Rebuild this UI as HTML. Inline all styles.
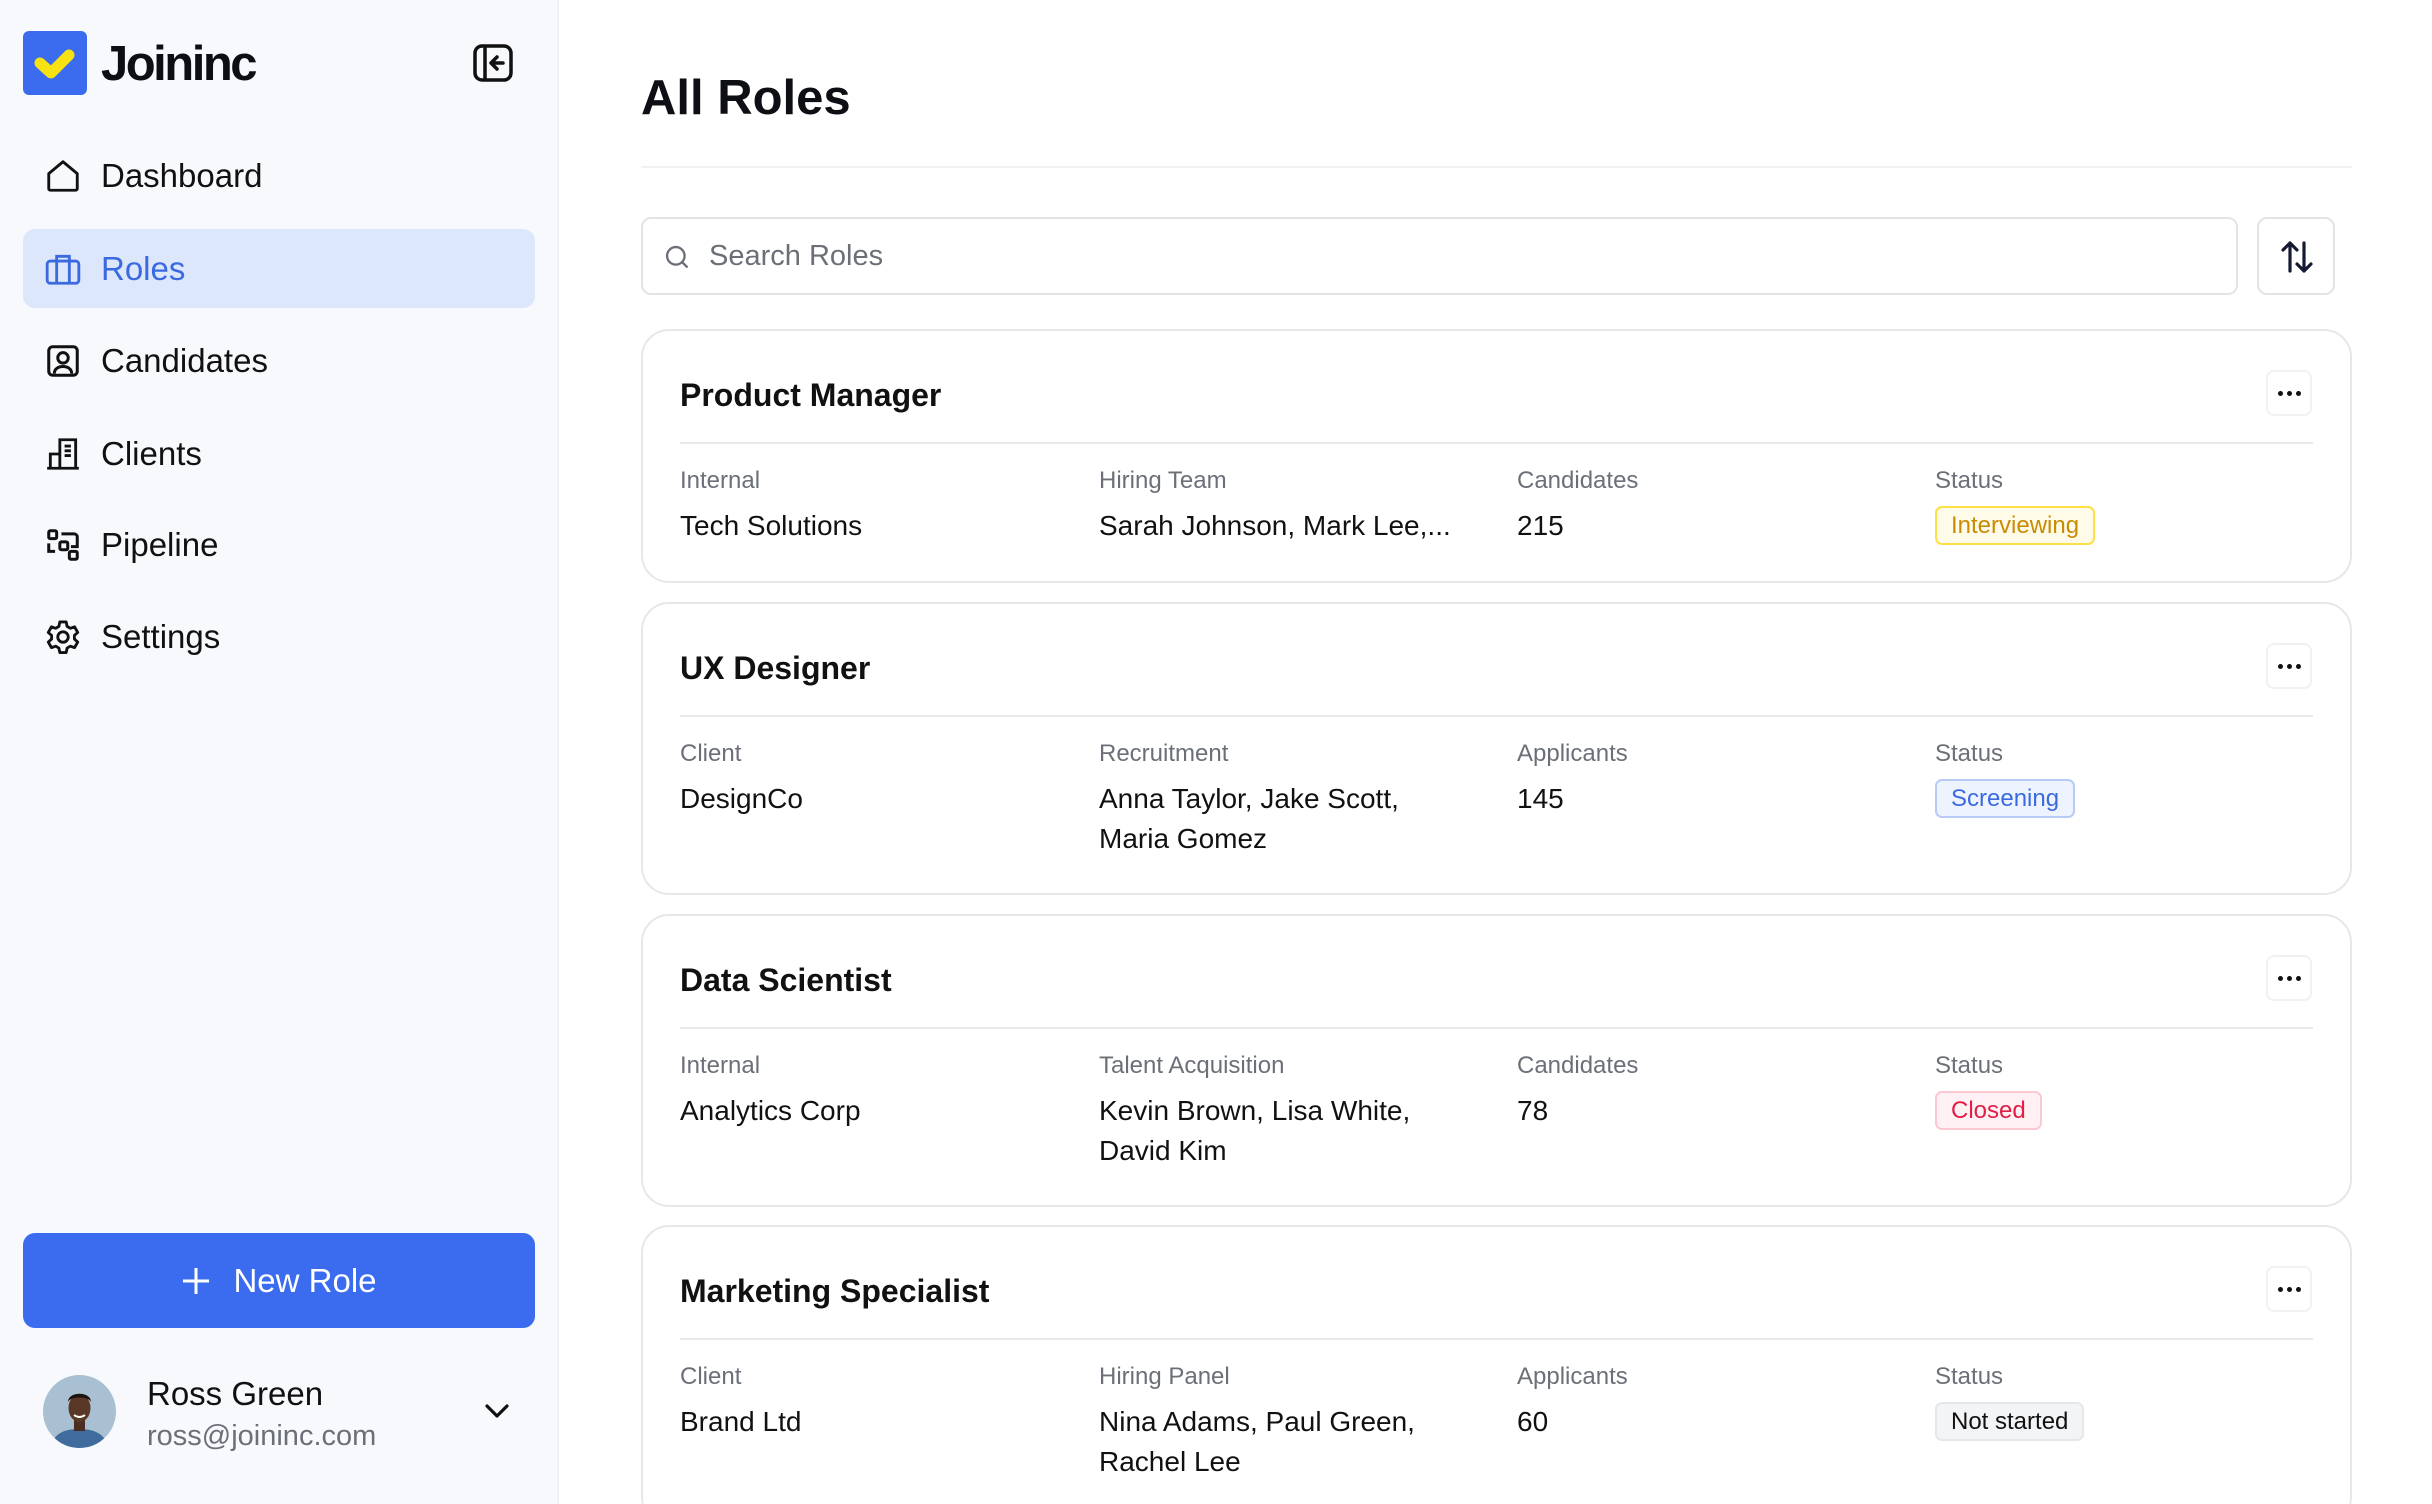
<!DOCTYPE html>
<html style="overflow:hidden;width:2432px;height:1504px"><head><meta charset="utf-8"><style>
*{box-sizing:border-box;margin:0;padding:0}
body{width:2432px;height:1504px;overflow:hidden;background:#fff;font-family:"Liberation Sans",Arial,sans-serif;color:#111;position:relative}
.abs{position:absolute}
.side{position:absolute;left:0;top:0;width:559px;height:1504px;background:#f7f9fc;border-right:2px solid #eef0f3}
.nav{position:absolute;left:23px;width:512px;height:79px;border-radius:12px;display:flex;align-items:center;font-size:33px;color:#111}
.nav svg{position:absolute;left:21px;top:50%;transform:translateY(-50%)}
.nav span{position:absolute;left:78px}
.card{position:absolute;left:641px;width:1711px;border:2px solid #e6e7ea;border-radius:28px;background:#fff}
.title{position:absolute;left:37px;top:44px;line-height:40px;font-size:32px;font-weight:bold;color:#111}
.dots{position:absolute;left:1623px;top:39px;width:46px;height:46px;border:2px solid #f0f1f3;border-radius:8px;display:flex;align-items:center;justify-content:center;gap:4px}
.dots i{width:5px;height:5px;background:#111;border-radius:50%}
.hr{position:absolute;left:37px;right:37px;top:111px;height:2px;background:#e9eaec}
.lab{position:absolute;top:133px;line-height:34px;font-size:24px;color:#6b7078}
.val{position:absolute;top:175px;line-height:40px;font-size:28px;color:#111}
.badge{position:absolute;top:175px;height:39px;line-height:35px;font-size:24px;padding:0 14px;border-radius:7px;border:2px solid}
</style></head><body>
<div class="side">
  <div class="abs" style="left:23px;top:31px;width:64px;height:64px;background:#3b6cf0;border-radius:6px">
    <svg width="64" height="64" viewBox="0 0 64 64"><path d="M17 32 L28 42 L46 24" stroke="#f9e211" stroke-width="11" fill="none" stroke-linecap="round" stroke-linejoin="round"/></svg>
  </div>
  <div class="abs" style="left:101px;top:36px;font-size:49px;font-weight:bold;letter-spacing:-2.5px;line-height:56px;color:#0d0f14">Joininc</div>
  <svg class="abs" style="left:473px;top:43px" width="40" height="40" viewBox="0 0 40 40" fill="none" stroke="#111" stroke-width="3.5" stroke-linecap="round" stroke-linejoin="round"><rect x="2" y="3" width="36" height="34" rx="7"/><line x1="12" y1="4" x2="12" y2="36"/><path d="M30 20 H19 M24 14 L18 20 L24 26"/></svg>

  <div class="nav" style="top:136px"><svg width="38" height="38" viewBox="0 0 24 24" fill="none" stroke="#111" stroke-width="1.8" stroke-linejoin="round"><path d="M3 10.5 L12 3 L21 10.5 V20 a1 1 0 0 1-1 1 H4 a1 1 0 0 1-1-1 Z"/></svg><span>Dashboard</span></div>
  <div class="nav" style="top:229px;background:#dce7fc;color:#3b6ae0"><svg width="38" height="38" viewBox="0 0 24 24" fill="none" stroke="#3b6ae0" stroke-width="1.8"><rect x="2" y="7" width="20" height="14" rx="2"/><path d="M8 7 V4 h8 v3 M8 7 V21 M16 7 V21"/></svg><span>Roles</span></div>
  <div class="nav" style="top:321px"><svg width="38" height="38" viewBox="0 0 24 24" fill="none" stroke="#111" stroke-width="1.9"><rect x="3" y="3" width="18" height="18" rx="2.5"/><circle cx="12" cy="10" r="3.3"/><path d="M6.5 20 c0-3 2.5-4.5 5.5-4.5 s5.5 1.5 5.5 4.5"/></svg><span>Candidates</span></div>
  <div class="nav" style="top:414px"><svg width="38" height="38" viewBox="0 0 24 24" fill="none" stroke="#111" stroke-width="1.8"><path d="M2 21 H22 M4 21 V12 H10 M10 21 V3 H20 V21 M13 7 h4 M13 10 h4 M13 13 h4"/></svg><span>Clients</span></div>
  <div class="nav" style="top:505px"><svg width="38" height="38" viewBox="0 0 24 24" fill="none" stroke="#111" stroke-width="1.9"><rect x="3" y="3" width="5" height="5" rx="1"/><rect x="10" y="10" width="5" height="5" rx="1"/><rect x="16" y="16" width="5" height="5" rx="1"/><path d="M3 11 V16 H7 M11 5 H19 a2 2 0 0 1 2 2 V13 H17"/></svg><span>Pipeline</span></div>
  <div class="nav" style="top:597px"><svg width="38" height="38" viewBox="0 0 24 24" fill="none" stroke="#111" stroke-width="1.8" stroke-linejoin="round"><path d="M10 2.5 h4 l.6 2.8 2 1.2 2.7-.9 2 3.5-2.1 1.9 v2.3 l2.1 1.9-2 3.5-2.7-.9-2 1.2-.6 2.8 h-4 l-.6-2.8-2-1.2-2.7.9-2-3.5 2.1-1.9 v-2.3 l-2.1-1.9 2-3.5 2.7.9 2-1.2 Z"/><circle cx="12" cy="12" r="3.3"/></svg><span>Settings</span></div>

  <div class="abs" style="left:23px;top:1233px;width:512px;height:95px;background:#3b6cf0;border-radius:12px;color:#fff;font-size:33px;display:flex;align-items:center;justify-content:center">
    <svg width="30" height="30" viewBox="0 0 30 30" style="margin-right:22px"><path d="M15 2 V28 M2 15 H28" stroke="#fff" stroke-width="3"/></svg>New Role</div>

  <div class="abs" style="left:43px;top:1375px;width:73px;height:73px;border-radius:50%;background:#a9bfd2;overflow:hidden">
    <svg width="73" height="73" viewBox="0 0 73 73"><path d="M8 73 C10 58 22 54 36 54 C50 54 62 58 66 73 Z" fill="#3f6c9c"/><rect x="31" y="44" width="11" height="12" fill="#4a2e22"/><ellipse cx="36.5" cy="33" rx="11" ry="14" fill="#5a3826"/><path d="M25 27 C25 16 48 16 48 27 C46 21 27 21 25 27Z" fill="#1b1411"/><path d="M31 40 Q36.5 44 42 40" stroke="#fff" stroke-width="2" fill="none"/></svg>
  </div>
  <div class="abs" style="left:147px;top:1374px;font-size:33px;line-height:40px;color:#111">Ross Green</div>
  <div class="abs" style="left:147px;top:1418px;font-size:29px;line-height:36px;color:#6b7078">ross@joininc.com</div>
  <svg class="abs" style="left:484px;top:1400px" width="26" height="22" viewBox="0 0 26 22"><path d="M3 6 L13 16 L23 6" stroke="#111" stroke-width="3.2" fill="none" stroke-linecap="round" stroke-linejoin="round"/></svg>
</div>

<div class="abs" style="left:641px;top:68px;font-size:49px;font-weight:bold;line-height:60px;color:#0d0f14">All Roles</div>
<div class="abs" style="left:641px;top:166px;width:1711px;height:2px;background:#f0f1f3"></div>

<div class="abs" style="left:641px;top:217px;width:1597px;height:78px;border:2px solid #e3e4e7;border-radius:10px">
  <svg class="abs" style="left:20px;top:24px" width="28" height="28" viewBox="0 0 24 24" fill="none" stroke="#6b7078" stroke-width="2"><circle cx="11" cy="11" r="7.5"/><path d="M16.5 16.5 L21 21"/></svg>
  <div class="abs" style="left:66px;top:18px;font-size:29px;line-height:38px;color:#6b7078">Search Roles</div>
</div>
<div class="abs" style="left:2257px;top:217px;width:78px;height:78px;border:2px solid #e3e4e7;border-radius:10px">
  <svg class="abs" style="left:19px;top:19px" width="38" height="38" viewBox="0 0 38 38" fill="none" stroke="#141a33" stroke-width="3.2" stroke-linecap="round" stroke-linejoin="round"><path d="M12 33 V5 M5 12 L12 5 L19 12 M26 5 V33 M19 26 L26 33 L33 26"/></svg>
</div>

<div class="card" style="top:329px;height:254px">
  <div class="title">Product Manager</div><div class="dots"><i></i><i></i><i></i></div><div class="hr"></div>
  <div class="lab" style="left:37px">Internal</div><div class="lab" style="left:456px">Hiring Team</div><div class="lab" style="left:874px">Candidates</div><div class="lab" style="left:1292px">Status</div>
  <div class="val" style="left:37px">Tech Solutions</div><div class="val" style="left:456px">Sarah Johnson, Mark Lee,...</div><div class="val" style="left:874px">215</div>
  <div class="badge" style="left:1292px;background:#fefce8;border-color:#fde047;color:#ca8a04">Interviewing</div>
</div>

<div class="card" style="top:602px;height:293px">
  <div class="title">UX Designer</div><div class="dots"><i></i><i></i><i></i></div><div class="hr"></div>
  <div class="lab" style="left:37px">Client</div><div class="lab" style="left:456px">Recruitment</div><div class="lab" style="left:874px">Applicants</div><div class="lab" style="left:1292px">Status</div>
  <div class="val" style="left:37px">DesignCo</div><div class="val" style="left:456px">Anna Taylor, Jake Scott,<br>Maria Gomez</div><div class="val" style="left:874px">145</div>
  <div class="badge" style="left:1292px;background:#eef4ff;border-color:#b7cbf6;color:#3b6ae0">Screening</div>
</div>

<div class="card" style="top:914px;height:293px">
  <div class="title">Data Scientist</div><div class="dots"><i></i><i></i><i></i></div><div class="hr"></div>
  <div class="lab" style="left:37px">Internal</div><div class="lab" style="left:456px">Talent Acquisition</div><div class="lab" style="left:874px">Candidates</div><div class="lab" style="left:1292px">Status</div>
  <div class="val" style="left:37px">Analytics Corp</div><div class="val" style="left:456px">Kevin Brown, Lisa White,<br>David Kim</div><div class="val" style="left:874px">78</div>
  <div class="badge" style="left:1292px;background:#fff1f3;border-color:#fbc8d2;color:#e11d48">Closed</div>
</div>

<div class="card" style="top:1225px;height:300px">
  <div class="title">Marketing Specialist</div><div class="dots"><i></i><i></i><i></i></div><div class="hr"></div>
  <div class="lab" style="left:37px">Client</div><div class="lab" style="left:456px">Hiring Panel</div><div class="lab" style="left:874px">Applicants</div><div class="lab" style="left:1292px">Status</div>
  <div class="val" style="left:37px">Brand Ltd</div><div class="val" style="left:456px">Nina Adams, Paul Green,<br>Rachel Lee</div><div class="val" style="left:874px">60</div>
  <div class="badge" style="left:1292px;background:#f3f4f6;border-color:#e5e7eb;color:#111">Not started</div>
</div>
</body></html>
